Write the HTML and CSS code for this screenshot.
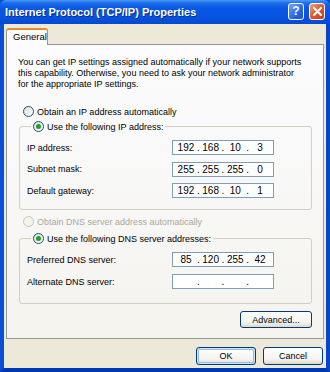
FILE: index.html
```html
<!DOCTYPE html>
<html lang="en">
<head>
  <meta charset="UTF-8">
  <title>Internet Protocol (TCP/IP) Properties</title>
  <link rel="stylesheet" href="styles.css">
</head>
<body>

  <div class="window">
    <div class="titlebar">
      <span class="title">Internet Protocol (TCP/IP) Properties</span>
      <div class="title-buttons">
        <span class="tbtn help">?</span>
        <span class="tbtn close">
          <svg width="9" height="9" viewBox="0 0 9 9"><path d="M1 1L8 8M8 1L1 8" stroke="#fff" stroke-width="2" stroke-linecap="square"/></svg>
        </span>
      </div>
    </div>

    <div class="content">
      <div class="tabs">
        <div class="tab">General</div>
      </div>

      <div class="panel">
        <p class="intro">You can get IP settings assigned automatically if your network supports this capability. Otherwise, you need to ask your network administrator for the appropriate IP settings.</p>

        <label class="radio top"><span class="dot"></span>Obtain an IP address automatically</label>

        <fieldset class="group">
          <legend><label class="radio"><span class="dot checked"></span>Use the following IP address:</label></legend>
          <div class="row">
            <span>IP address:</span>
            <div class="ipbox"><span>192</span><i>.</i><span>168</span><i>.</i><span>10</span><i>.</i><span>3</span></div>
          </div>
          <div class="row">
            <span>Subnet mask:</span>
            <div class="ipbox"><span>255</span><i>.</i><span>255</span><i>.</i><span>255</span><i>.</i><span>0</span></div>
          </div>
          <div class="row">
            <span>Default gateway:</span>
            <div class="ipbox"><span>192</span><i>.</i><span>168</span><i>.</i><span>10</span><i>.</i><span>1</span></div>
          </div>
        </fieldset>

        <label class="radio top disabled"><span class="dot"></span>Obtain DNS server address automatically</label>

        <fieldset class="group dns">
          <legend><label class="radio"><span class="dot checked"></span>Use the following DNS server addresses:</label></legend>
          <div class="row">
            <span>Preferred DNS server:</span>
            <div class="ipbox"><span>85</span><i>.</i><span>120</span><i>.</i><span>255</span><i>.</i><span>42</span></div>
          </div>
          <div class="row">
            <span>Alternate DNS server:</span>
            <div class="ipbox"><span></span><i>.</i><span></span><i>.</i><span></span><i>.</i><span></span></div>
          </div>
        </fieldset>

        <div class="adv-row">
          <button class="btn adv">Advanced...</button>
        </div>
      </div>

      <div class="footer">
        <button class="btn default">OK</button>
        <button class="btn">Cancel</button>
      </div>
    </div>
  </div>

</body>
</html>
```

FILE: styles.css
```css
body {
  margin: 0;
  font-family: 'Liberation Sans', Arial, sans-serif;
  font-size: 9px;
  color: #000;
}

.window {
  width: 330px;
  height: 372px;
  box-sizing: border-box;
  display: flex;
  flex-direction: column;
  background: #0a4ed8;
  border-left: 4px solid #0b4fd6;
  border-right: 4px solid #0a44c9;
  border-bottom: 4px solid #0037b3;
}

.titlebar {
  height: 24px;
  margin: 0 -4px;
  padding: 0 5px;
  display: flex;
  align-items: center;
  justify-content: space-between;
  background: linear-gradient(to bottom, #4a9af8 0%, #1f6eea 12%, #0a5ae6 30%, #0553e1 70%, #0648cf 100%);
  border-radius: 6px 6px 0 0;
}

.title {
  color: #fff;
  font-weight: bold;
  font-size: 11px;
  text-shadow: 1px 1px #0a2a8a;
}

.title-buttons {
  display: flex;
  gap: 5px;
  margin-top: -2px;
}

.tbtn {
  width: 14px;
  height: 15px;
  border: 1px solid #fff;
  border-radius: 3px;
  display: flex;
  align-items: center;
  justify-content: center;
  color: #fff;
  font-weight: bold;
  font-size: 12px;
}

.help {
  background: linear-gradient(135deg, #6fa6ff, #2a66e8 60%, #1c4fd0);
}

.close {
  background: linear-gradient(135deg, #f0a080, #e2582e 50%, #c63a12);
}

.content {
  flex: 1;
  background: #ece9d8;
  padding: 4px 2px 0 2px;
  display: flex;
  flex-direction: column;
}

.tabs {
  display: flex;
  height: 16px;
}

.tab {
  width: 42px;
  box-sizing: border-box;
  border: 1px solid #919b9c;
  border-bottom: none;
  border-top: 2px solid #e68b2c;
  border-radius: 3px 3px 0 0;
  background: #fcfcfe;
  padding: 1px 0 0 6px;
  position: relative;
  z-index: 1;
  height: 17px;
  font-size: 9.5px;
}

.panel {
  height: 295px;
  box-sizing: border-box;
  border: 1px solid #919b9c;
  background: linear-gradient(to bottom, #fcfcfe, #f4f3ee);
  padding: 12px 11px 0 11px;
}

.intro {
  margin: 0 0 15px 0;
  line-height: 11px;
  padding-right: 10px;
}

.radio {
  display: flex;
  align-items: center;
  height: 13px;
  white-space: nowrap;
}

.radio.top {
  padding-left: 5px;
}

.dot {
  width: 9px;
  height: 9px;
  border: 1px solid #1c5180;
  border-radius: 50%;
  background: linear-gradient(135deg, #dcdcd6, #fff);
  margin-right: 3px;
  position: relative;
}

.dot.checked::after {
  content: '';
  position: absolute;
  left: 2px;
  top: 2px;
  width: 5px;
  height: 5px;
  border-radius: 50%;
  background: #21a121;
}

.disabled {
  color: #aca899;
}

.disabled .dot {
  border-color: #cac8bb;
  background: #f5f4ea;
}

.group {
  margin: 2px 0 5px 1px;
  padding: 7px 37px 11px 7px;
  border: 1px solid #d0d0bf;
  border-radius: 3px;
}

.group.dns {
  margin-top: 4px;
  padding-bottom: 7px;
}

.group legend {
  padding: 0 2px;
  margin-left: 4px;
}

.row {
  display: flex;
  justify-content: space-between;
  align-items: center;
  height: 15px;
  margin-bottom: 6.5px;
}

.row:last-child {
  margin-bottom: 0;
}

.dns .row {
  margin-bottom: 7px;
}

.ipbox {
  width: 102px;
  height: 15px;
  box-sizing: border-box;
  border: 1px solid #7f9db9;
  background: #fff;
  display: grid;
  grid-template-columns: 1fr auto 1fr auto 1fr auto 1fr;
  align-items: center;
  padding: 0 4px;
  font-size: 10px;
}

.ipbox span {
  text-align: center;
}

.ipbox i {
  font-style: normal;
  padding: 0 2px;
}

.adv-row {
  display: flex;
  justify-content: flex-end;
  margin-top: 7px;
}

.btn {
  font-family: inherit;
  font-size: 9px;
  height: 18px;
  width: 60px;
  border: 1px solid #003c74;
  border-radius: 3px;
  background: linear-gradient(to bottom, #ffffff, #f3f3ef 70%, #dcd8cc);
  padding: 0;
  color: #000;
}

.btn.adv {
  width: 72px;
  height: 17px;
}

.btn.default {
  box-shadow: inset 0 0 0 1px #cee7ff, inset 0 0 0 2px #98b8ea;
}

.footer {
  display: flex;
  justify-content: flex-end;
  gap: 7px;
  padding: 8px 1px 0 0;
}
```
